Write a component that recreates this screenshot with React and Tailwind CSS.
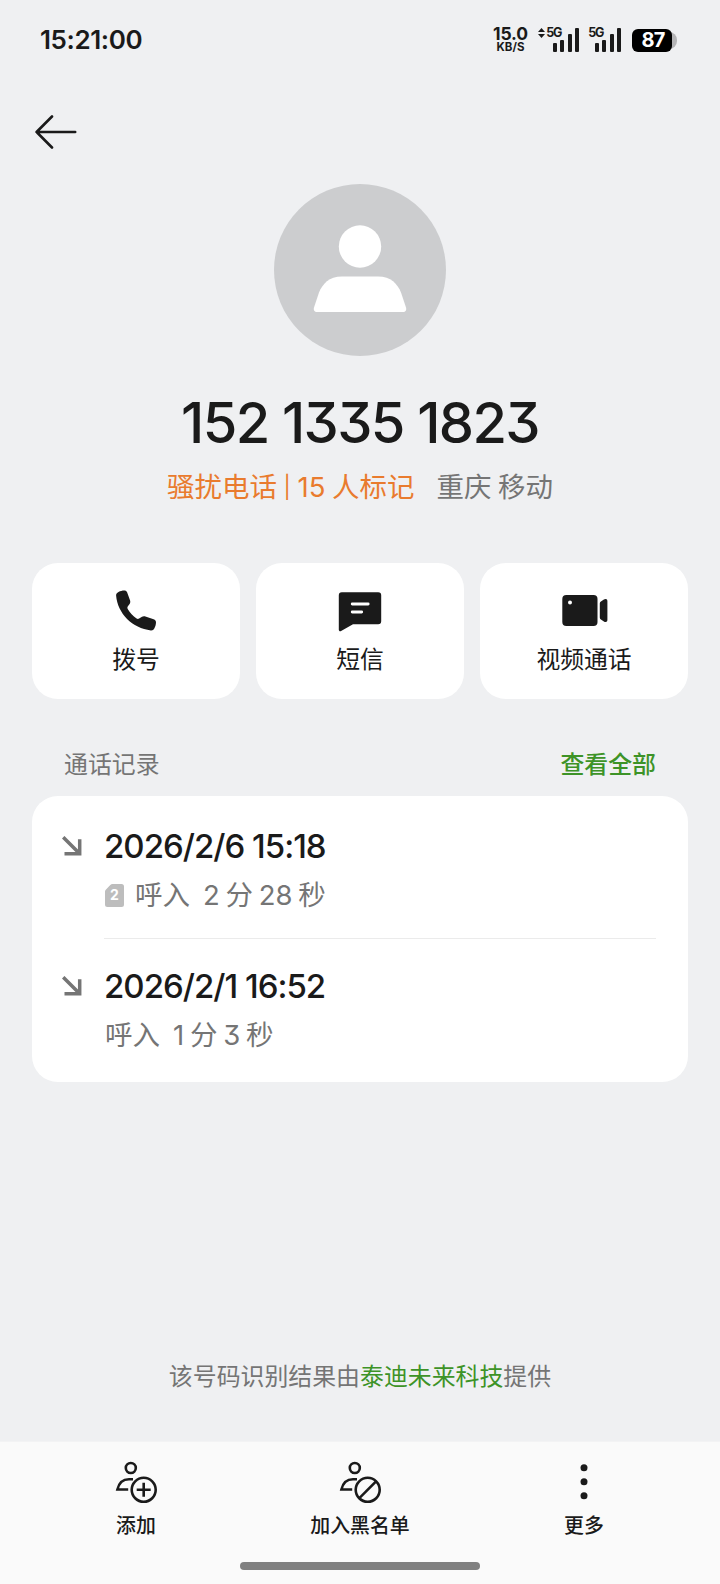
import React from "react";

const signalBars = [9, 12, 18, 24];

function Signal({ arrows }) {
  return (
    <div className={arrows ? "relative h-6 w-[41px]" : "relative h-6 w-8"}>
      {arrows && (
        <svg viewBox="0 0 7 10" className="absolute left-0 top-0 h-[10px] w-[7px]" fill="#1a1a1a">
          <path d="M3.500 0 7 4H0zM3.500 10 0 6h7z" />
        </svg>
      )}
      <span className="absolute right-[18px] top-0 text-[12.500px] leading-[10px] font-bold tracking-[-1.300px]">5G</span>
      <div className="absolute right-0 bottom-0 flex items-end gap-[3.400px]">
        {signalBars.map((height) => (
          <span key={height} className="w-1 rounded-[1px] bg-[#1a1a1a]" style={{ height }} />
        ))}
      </div>
    </div>
  );
}

function StatusBar() {
  return (
    <div className="flex h-20 items-center justify-between pl-[40px] pr-[43px]">
      <span className="text-[26px] leading-8 font-semibold tracking-[-0.400px]">15:21:00</span>
      <div className="flex items-center">
        <div className="mr-[9px] mb-[2px] flex w-[37px] flex-col items-center font-bold">
          <span className="text-[17.500px] leading-[16px] tracking-[-0.100px]">15.0</span>
          <span className="text-[11.500px] leading-[10px]">KB/S</span>
        </div>
        <Signal arrows />
        <div className="ml-[10px] mr-[11px]">
          <Signal />
        </div>
        <div className="relative h-[23px] w-[45px]">
          <span className="absolute right-0 top-[3px] h-[17px] w-3 rounded-r-[8px] bg-[#b4b4b6]" />
          <div className="absolute inset-y-0 left-0 flex w-10 items-center justify-center rounded-[6px] bg-black pl-[2px] text-[20px] leading-none font-bold tracking-[-0.900px] text-white">
            87
          </div>
        </div>
      </div>
    </div>
  );
}

function Avatar() {
  return (
    <svg viewBox="0 0 172 172" className="size-[172px]">
      <circle cx="86" cy="86" r="86" fill="#cccdcf" />
      <circle cx="86" cy="62.5" r="21.2" fill="#fff" />
      <path
        d="M68 92.5h36c13 0 19.500 7.500 23 16l5 15c.8 2.600-.5 4.500-3 4.500H43c-2.500 0-3.800-1.900-3-4.500l5-15c3.500-8.500 10-16 23-16z"
        fill="#fff"
      />
    </svg>
  );
}

function PhoneIcon() {
  return (
    <svg viewBox="0 0 48 48" className="size-12" fill="#1a1a1a">
      <path d="M6.500 5.900C8.300 4.900 10.300 4.400 12.200 4.400C13.600 4.400 14.600 5 15.100 6.300L18 14.300C18.500 15.800 18.300 17 17.600 18L15.700 20.600C15.200 21.400 15.200 22.300 15.700 23.100C18 26.900 20.900 30 24.600 32.500C25.400 33 26.300 33 27.100 32.500L30 30.700C31 30.100 32.100 30 33.400 30.400L41.600 33.300C43.200 33.900 44.100 35 44 36.500C43.900 38.700 43.300 40.700 42.300 42.500C41.600 43.900 40.500 44.500 38.900 44.400C20.500 42.500 5.500 27.500 4.100 9.600C4 7.900 4.900 6.700 6.500 5.900z" />
    </svg>
  );
}

function MessageIcon() {
  return (
    <svg viewBox="0 0 48 48" className="size-12">
      <path
        d="M5.800 6.300h36.400a3 3 0 0 1 3 3v25.900a3 3 0 0 1-3 3H17L5.100 45c-1 .7-2.300.1-2.300-1.200V9.300a3 3 0 0 1 3-3z"
        fill="#1a1a1a"
      />
      <path d="M16.200 18h16M16.200 26h9.500" stroke="#fff" strokeWidth="2.800" strokeLinecap="round" />
    </svg>
  );
}

function VideoIcon() {
  return (
    <svg viewBox="0 0 48 48" className="size-12" fill="#1a1a1a">
      <rect x="2.300" y="9" width="35.200" height="31" rx="4" />
      <circle cx="10" cy="16.500" r="2" fill="#fff" />
      <path d="M39.800 17.500c0-.9.400-1.500 1.100-2l3-1.900c.5-.4 1-.6 1.700-.6 1.200 0 1.800.8 1.800 2.200v18.600c0 1.400-.6 2.200-1.800 2.200-.6 0-1.200-.2-1.700-.6l-3-1.900c-.7-.5-1.100-1.100-1.100-2z" />
    </svg>
  );
}

function ContactIcon({ children }) {
  return (
    <svg viewBox="0 0 44 44" className="size-11" fill="none" stroke="#1a1a1a" strokeWidth="2.600">
      <circle cx="16.800" cy="8" r="5" />
      <path d="M19 19.200h-4C8.500 19.200 5 22.500 3.400 29.500h10.800" />
      <circle cx="29.700" cy="29.800" r="12" />
      {children}
    </svg>
  );
}

function AddIcon() {
  return (
    <ContactIcon>
      <path d="M29.700 22.800v14M22.700 29.800h14" />
    </ContactIcon>
  );
}

function BlockIcon() {
  return (
    <ContactIcon>
      <path d="M38.300 21.200 21.100 38.400" />
    </ContactIcon>
  );
}

function MoreIcon() {
  return (
    <svg viewBox="0 0 44 44" className="size-11" fill="#1a1a1a">
      <circle cx="22" cy="7.700" r="3.500" />
      <circle cx="22" cy="21.700" r="3.500" />
      <circle cx="22" cy="35.700" r="3.500" />
    </svg>
  );
}

function IncomingIcon() {
  return (
    <svg viewBox="0 0 20 20" className="mt-[10px] size-5 shrink-0" fill="none" stroke="#757575" strokeWidth="3.500">
      <path d="M1.200 1.200 17 17M17.700 3.200v14.500H2.500" />
    </svg>
  );
}

function SimBadge() {
  return (
    <span className="relative mr-[11px] flex h-[23px] w-[19px] items-center justify-center text-[14px] leading-none font-bold text-white">
      <svg viewBox="0 0 19 23" className="absolute inset-0 h-full w-full" fill="#bdbdbd">
        <path d="M7.500 0H16.500A2.500 2.500 0 0 1 19 2.500V20.500A2.500 2.500 0 0 1 16.500 23H2.500A2.500 2.500 0 0 1 0 20.500V7.500Q0 6.300 1 5.400L5.300 1Q6.200 0 7.500 0z" />
      </svg>
      <span className="relative">2</span>
    </span>
  );
}

const actions = [
  { label: "拨号", icon: PhoneIcon },
  { label: "短信", icon: MessageIcon },
  { label: "视频通话", icon: VideoIcon },
];

const calls = [
  { date: "2026/2/6 15:18", type: "呼入", duration: "2 分 28 秒", sim: true },
  { date: "2026/2/1 16:52", type: "呼入", duration: "1 分 3 秒", sim: false },
];

const tabs = [
  { label: "添加", icon: AddIcon },
  { label: "加入黑名单", icon: BlockIcon },
  { label: "更多", icon: MoreIcon },
];

export default function App() {
  return (
    <div className="flex h-[1584px] w-[720px] flex-col overflow-hidden bg-[#eff0f2] font-['Inter','Noto_Sans_CJK_SC',sans-serif] text-[#1a1a1a] [font-feature-settings:'cv09'] whitespace-nowrap">
      <StatusBar />

      <header className="flex h-[104px] items-center px-[35px]">
        <svg viewBox="0 0 42 34" className="h-[34px] w-[42px]" fill="none" stroke="#1a1a1a" strokeWidth="2.600" strokeLinecap="round" strokeLinejoin="round">
          <path d="M17 1.500 1.600 17 17 32.500M1.600 17h38.600" />
        </svg>
      </header>

      <section className="flex flex-col items-center">
        <Avatar />
        <h1 className="mt-[35px] text-[56px] leading-[64px] font-medium tracking-[-1.600px]">152 1335 1823</h1>
        <div className="mt-[12px] flex gap-[22px] text-[27.500px] leading-10 font-[370] [word-spacing:-1.200px]">
          <span className="text-[#e97b2e]">
            骚扰电话 <span className="relative -top-[2px] text-[22px] leading-none">|</span> 15 人标记
          </span>
          <span className="text-[#757575]">重庆 移动</span>
        </div>
      </section>

      <section className="mx-8 mt-[56px] grid grid-cols-3 gap-4">
        {actions.map(({ label, icon: Icon }) => (
          <button key={label} className="flex h-[136px] flex-col items-center rounded-[26px] bg-white pt-[23px]">
            <Icon />
            <span className="mt-[10px] text-[23.800px] leading-8">{label}</span>
          </button>
        ))}
      </section>

      <div className="mx-16 mt-[50px] flex h-[47px] items-start justify-between text-[23.900px] leading-8">
        <span className="text-[#757575]">通话记录</span>
        <button className="font-medium text-[#3d9327]">查看全部</button>
      </div>

      <section className="mx-8 h-[286px] rounded-[26px] bg-white px-8">
        {calls.map((call, index) => (
          <div key={call.date} className={index === 0 ? "flex pt-[30px]" : "flex pt-[27px]"}>
            <div className="-ml-[2px] w-[42px] shrink-0">
              <IncomingIcon />
            </div>
            <div className={index === 0 ? "h-[113px] flex-1 border-b border-[#ebebeb]" : "h-[113px] flex-1"}>
              <div className="text-[33px] leading-10 font-medium tracking-[-1px]">{call.date}</div>
              <div className="mt-[9px] ml-px flex items-center text-[27.500px] leading-10 font-[370] text-[#757575]">
                {call.sim && <SimBadge />}
                <span>{call.type}</span>
                <span className="ml-[13px] [word-spacing:-2px]">{call.duration}</span>
              </div>
            </div>
          </div>
        ))}
      </section>

      <p className="mt-auto mb-[48px] text-center text-[23.900px] leading-8 text-[#757575]">
        该号码识别结果由<span className="text-[#3d9327]">泰迪未来科技</span>提供
      </p>

      <nav className="flex h-[143px] flex-col items-center border-t border-[#f3f3f4] bg-[#fafafa]">
        <div className="grid w-[672px] grid-cols-3">
          {tabs.map(({ label, icon: Icon }) => (
            <button key={label} className="flex flex-col items-center pt-[18px] text-[19.900px] leading-7 font-medium">
              <Icon />
              <span className="mt-[8px]">{label}</span>
            </button>
          ))}
        </div>
        <div className="mt-auto mb-[14px] h-2 w-60 shrink-0 rounded-full bg-[#808080]" />
      </nav>
    </div>
  );
}
